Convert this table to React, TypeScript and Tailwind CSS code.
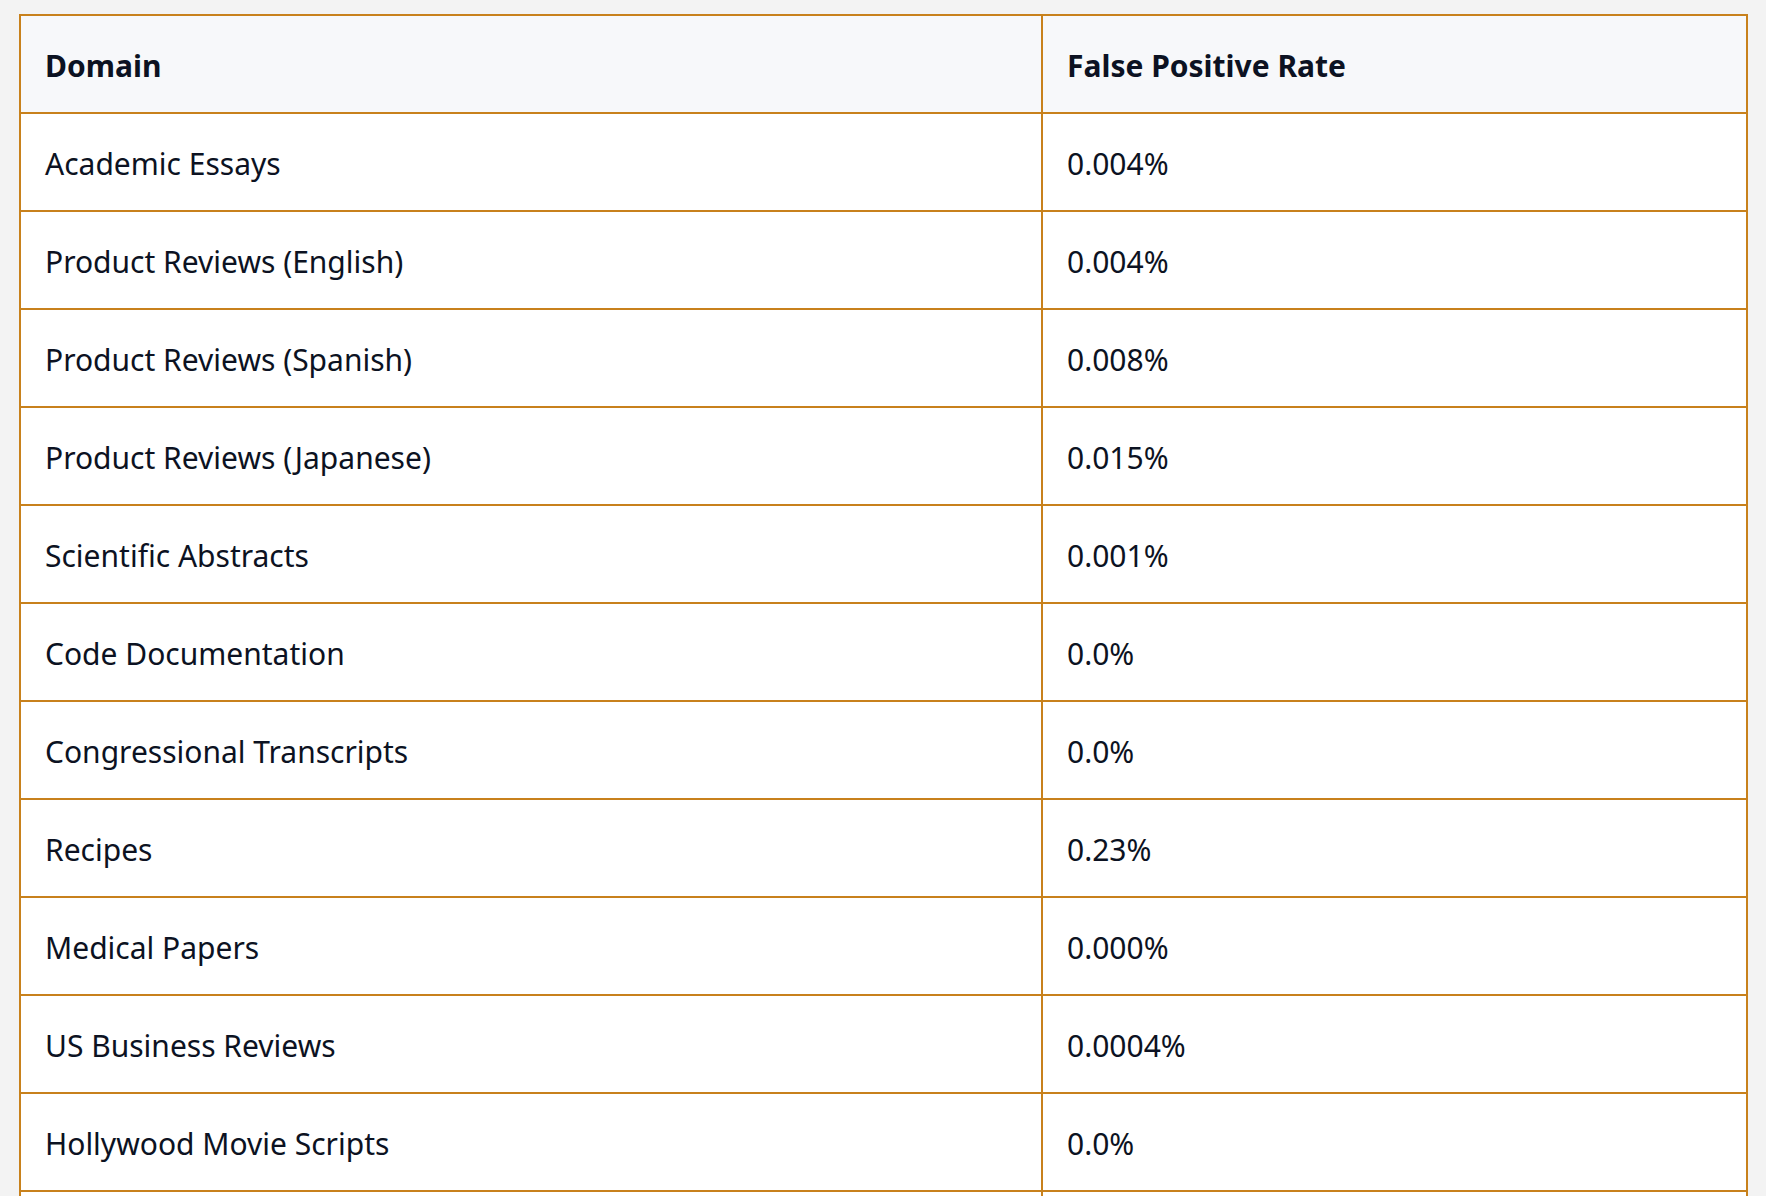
import React from "react";

const rows: [string, string][] = [
  ["Academic Essays", "0.004%"],
  ["Product Reviews (English)", "0.004%"],
  ["Product Reviews (Spanish)", "0.008%"],
  ["Product Reviews (Japanese)", "0.015%"],
  ["Scientific Abstracts", "0.001%"],
  ["Code Documentation", "0.0%"],
  ["Congressional Transcripts", "0.0%"],
  ["Recipes", "0.23%"],
  ["Medical Papers", "0.000%"],
  ["US Business Reviews", "0.0004%"],
  ["Hollywood Movie Scripts", "0.0%"],
];

const cell = "border-2 border-[#c8811c] px-6 pt-[26px] pb-[22px] text-left leading-[48px]";

export default function App() {
  return (
    <div
      className="min-h-screen bg-[#f3f3f3] pl-[19px] pr-[18px] pt-[14px] text-[30px] text-[#0c1222]"
      style={{ fontFamily: '"Noto Sans", "Open Sans", sans-serif' }}
    >
      <table className="w-full border-collapse bg-white">
        <thead>
          <tr className="bg-[#f7f8fa]">
            <th className={`${cell} w-[1022px] font-bold`}>Domain</th>
            <th className={`${cell} font-bold`}>False Positive Rate</th>
          </tr>
        </thead>
        <tbody>
          {rows.map(([domain, rate]) => (
            <tr key={domain}>
              <td className={cell}>{domain}</td>
              <td className={cell}>{rate}</td>
            </tr>
          ))}
          <tr>
            <td className={cell}>&nbsp;</td>
            <td className={cell}>&nbsp;</td>
          </tr>
        </tbody>
      </table>
    </div>
  );
}
